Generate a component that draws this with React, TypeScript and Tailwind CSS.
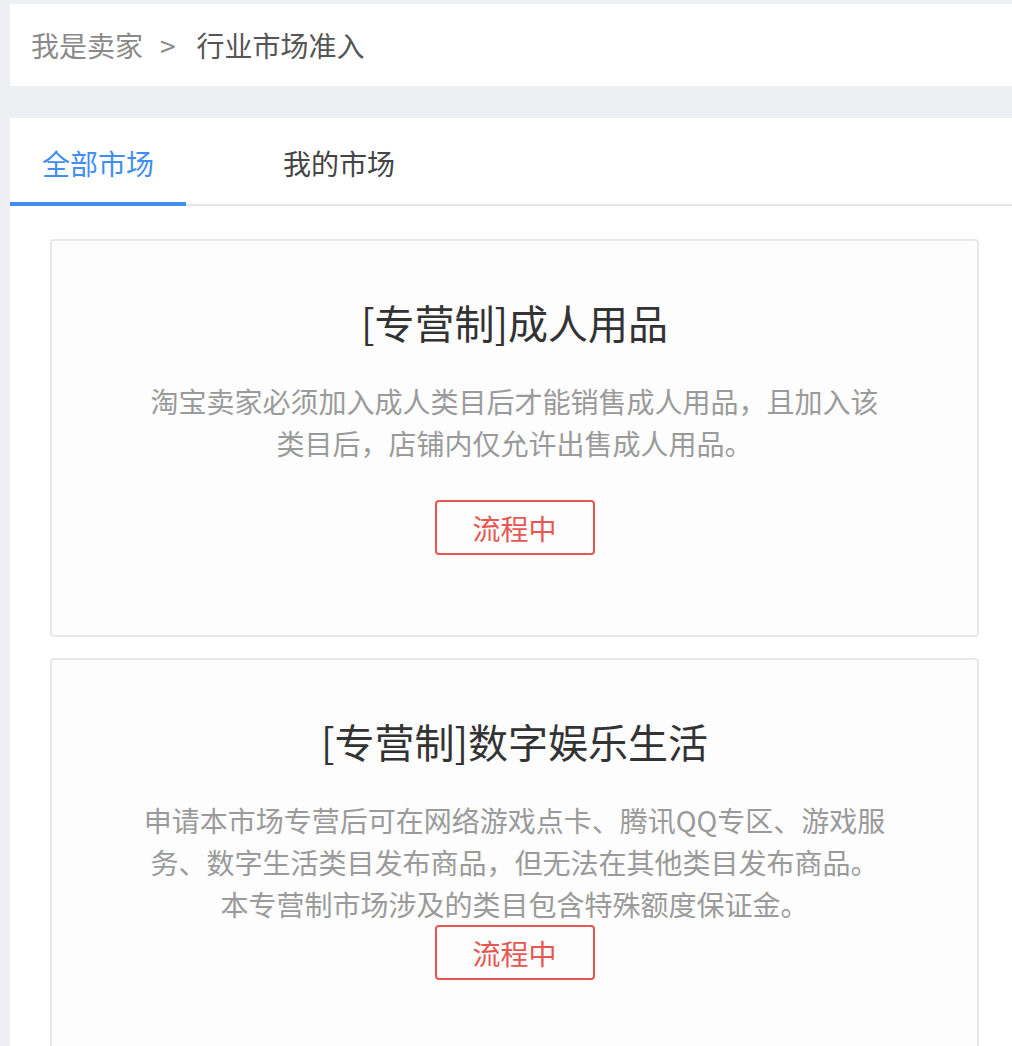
import React from "react";

type Market = {
  title: string;
  desc: string;
};

const markets: Market[] = [
  {
    title: "[专营制]成人用品",
    desc: "淘宝卖家必须加入成人类目后才能销售成人用品，且加入该类目后，店铺内仅允许出售成人用品。",
  },
  {
    title: "[专营制]数字娱乐生活",
    desc: "申请本市场专营后可在网络游戏点卡、腾讯QQ专区、游戏服务、数字生活类目发布商品，但无法在其他类目发布商品。本专营制市场涉及的类目包含特殊额度保证金。",
  },
];

function MarketCard({ market }: { market: Market }) {
  return (
    <div className="flex flex-col items-center rounded-[4px] border-2 border-[#e8e8e8] bg-[#fdfdfd] pt-[51px] pb-[80px]">
      <h2 className="text-[40px] leading-[60px] font-normal text-[#333333]">{market.title}</h2>
      <p className="mt-[28px] min-h-[120px] max-w-[750px] text-center text-[28px] leading-[42px] text-[#9a9a9a]">
        {market.desc}
      </p>
      <button className="flex h-[55px] w-[160px] items-center justify-center rounded-[4px] border-2 border-[#e85652] text-[28px] text-[#e85652]">
        流程中
      </button>
    </div>
  );
}

export default function App() {
  return (
    <div
      className="min-h-screen bg-[#eeeff3] pl-[10px] pt-[4px]"
      style={{ fontFamily: '"Noto Sans CJK SC", "Noto Sans", sans-serif' }}
    >
      {/* breadcrumb */}
      <div className="flex h-[82px] items-center bg-white pl-[21px] text-[28px]">
        <span className="text-[#8a8a8a]">我是卖家</span>
        <span className="ml-[17px] mr-[21px] text-[#8a8a8a]">&gt;</span>
        <span className="text-[#555555]">行业市场准入</span>
      </div>

      {/* main panel */}
      <div className="mt-[32px] bg-white">
        <div className="flex h-[88px] gap-[65px] border-b-2 border-[#e6e6e6]">
          <div className="-mb-[2px] flex h-[88px] w-[176px] items-center justify-center border-b-4 border-[#3f8ef0] pt-[6px] text-[28px] text-[#3f8ef0]">
            全部市场
          </div>
          <div className="-mb-[2px] flex h-[88px] w-[176px] items-center justify-center border-b-4 border-transparent pt-[6px] text-[28px] text-[#444444]">
            我的市场
          </div>
        </div>

        <div className="flex flex-col gap-[21px] pt-[33px] pl-[40px] pr-[33px] pb-[40px]">
          {markets.map((m) => (
            <MarketCard key={m.title} market={m} />
          ))}
        </div>
      </div>
    </div>
  );
}
